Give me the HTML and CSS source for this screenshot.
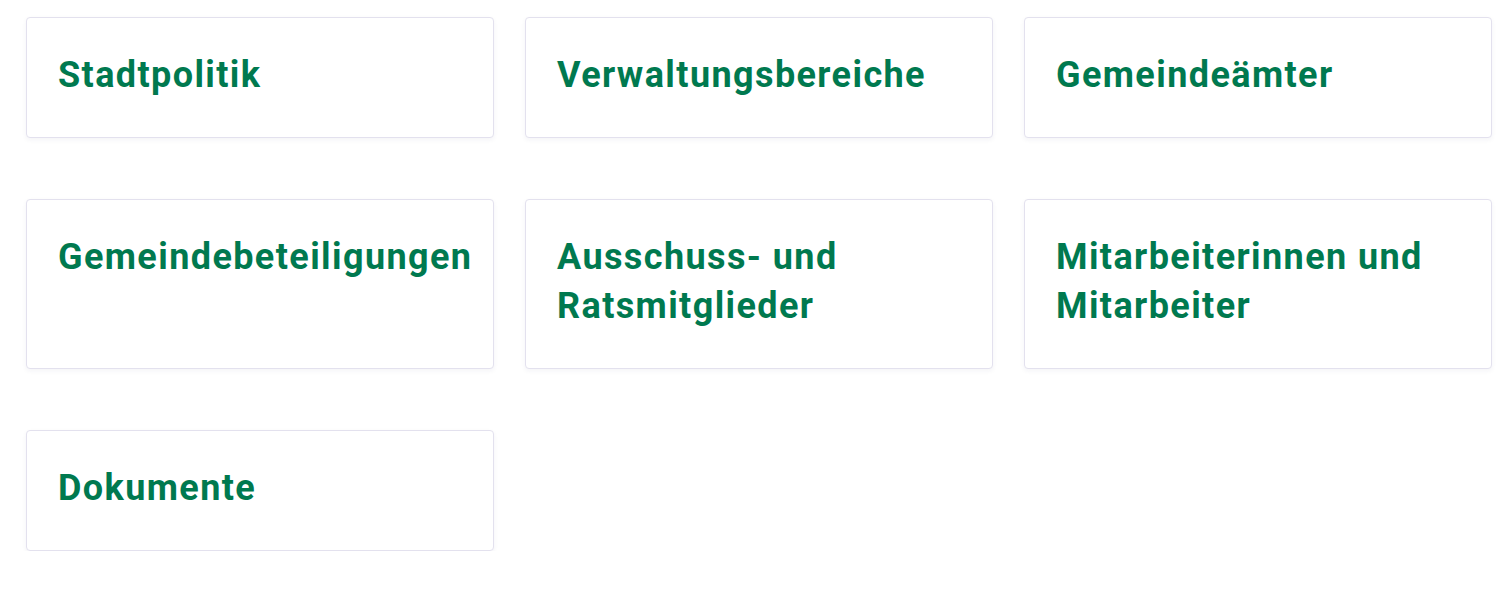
FILE: index.html
```html
<!DOCTYPE html>
<html lang="de">
<head>
<meta charset="utf-8">
<title>Übersicht</title>
<link rel="stylesheet" href="styles.css">
</head>
<body>
<div class="grid">
  <a class="card" href="#"><span class="title">Stadtpolitik</span></a>
  <a class="card" href="#"><span class="title">Verwaltungsbereiche</span></a>
  <a class="card" href="#"><span class="title">Gemeindeämter</span></a>
  <a class="card" href="#"><span class="title">Gemeindebeteiligungen</span></a>
  <a class="card" href="#"><span class="title">Ausschuss- und Ratsmitglieder</span></a>
  <a class="card" href="#"><span class="title">Mitarbeiterinnen und Mitarbeiter</span></a>
  <a class="card" href="#"><span class="title">Dokumente</span></a>
</div>
</body>
</html>
```
FILE: styles.css
```css
html, body {
  margin: 0;
  padding: 0;
  background: #ffffff;
}
.grid {
  display: grid;
  grid-template-columns: repeat(3, 1fr);
  column-gap: 31px;
  row-gap: 61px;
  padding: 17px 19px 0 26px;
}
.card {
  display: block;
  text-decoration: none;
  background: #fff;
  border: 1px solid #e3e1ee;
  border-radius: 4px;
  box-shadow: 0 2px 5px rgba(40, 30, 90, 0.05);
  padding: 33px 16px 37px 31px;
}
.title {
  display: block;
  font-family: Roboto, "Liberation Sans", sans-serif;
  font-weight: 700;
  font-size: 36px;
  letter-spacing: 1.4px;
  line-height: 49px;
  color: #00794f;
}
```
